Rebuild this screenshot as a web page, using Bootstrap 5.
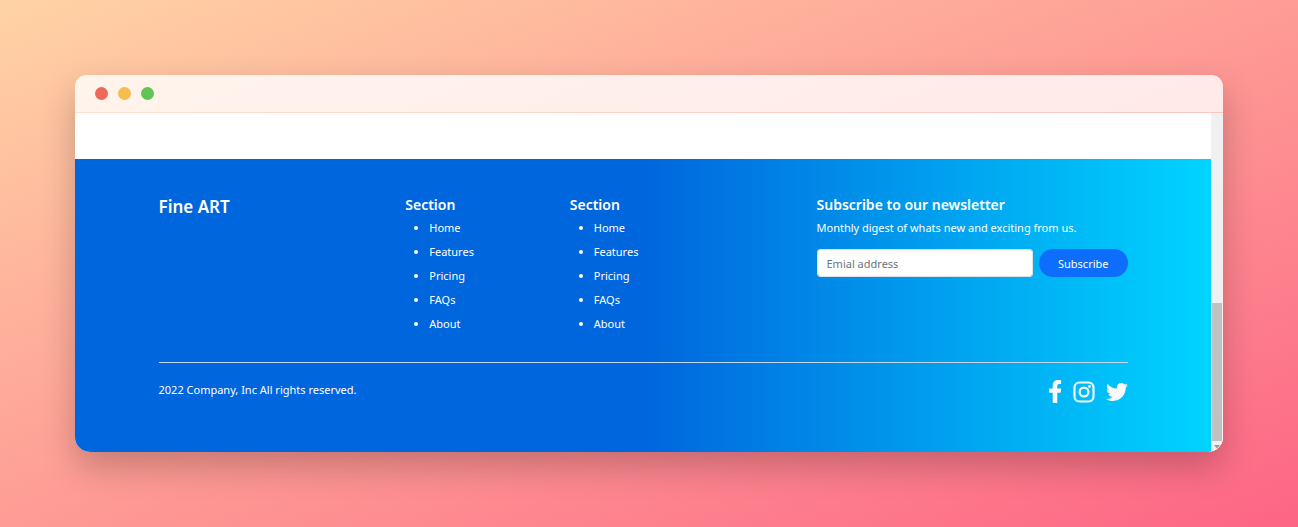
<!DOCTYPE html>
<html lang="en">
<head>
<meta charset="utf-8">
<meta name="viewport" content="width=device-width, initial-scale=1">
<title>Fine ART</title>
<link href="https://cdn.jsdelivr.net/npm/bootstrap@5.3.0/dist/css/bootstrap.min.css" rel="stylesheet">
<style>
  body {
    font-family: "Noto Sans", "Open Sans", sans-serif;
    font-size: 11px;
    line-height: 18px;
    background: linear-gradient(to bottom right, #ffd3a5 0%, #fd6585 100%);
    padding: 75px;
  }
  .window {
    border-radius: 11px 11px 15px 15px;
    box-shadow: 0 15px 34px rgba(0, 0, 0, .22);
  }
  .window-bar {
    height: 38px;
    padding: 0 20px;
    gap: 10px;
    background: rgba(255, 255, 255, .8);
    background-clip: padding-box;
    border-bottom: 1px solid rgba(255, 255, 255, .45);
    border-radius: 11px 11px 0 0;
  }
  .dot { width: 13px; height: 13px; }
  .dot-close { background: #ec695c; }
  .dot-min { background: #f4bd4e; }
  .dot-max { background: #61c454; }
  .viewport { border-radius: 0 0 15px 15px; }
  .page-end { height: 46px; }
  .site-footer {
    padding: 36px 0 49px;
    background: linear-gradient(90deg, #0066dd 0%, #0066dd 50%, #00d4ff 100%);
  }
  .footer-width { max-width: 987px; --bs-gutter-x: 18px; }
  .footer-width > .row { --bs-gutter-x: 18px; }
  .brand { font-size: 17px; line-height: 24px; font-weight: 600; }
  .heading { font-size: 14px; line-height: 20px; font-weight: 600; margin-bottom: 4px; }
  .links { padding-left: 24px; margin-bottom: 29px; }
  .links li { margin-bottom: 6px; }
  .links a { color: inherit; text-decoration: none; }
  .intro { margin-bottom: 12px; }
  .signup { gap: 6px; }
  .email {
    height: 28px;
    padding: 4px 9px;
    font-size: 11px;
    border-radius: 3px;
  }
  .email::placeholder { color: #6c757d; }
  .subscribe {
    height: 28px;
    padding: 1px 19px 0;
    font-size: 11px;
    line-height: 27px;
    border: 0;
    --bs-btn-bg: #0d6efd;
  }
  .legal { border-top: 1px solid #c3d6ee; padding-top: 17px; }
  .copyright { line-height: 20px; }
  .social { gap: 11px; color: #f8f9fa; }
  .social a { color: inherit; }
  .scroll-track { width: 12px; background: #f0f0f0; padding: 0 1px; }
  .scroll-thumb { margin-top: 190px; background: #c1c1c1; }
  .scroll-arrow { height: 11px; }
</style>
</head>
<body class="min-vh-100">
<main class="window">
  <div class="window-bar d-flex align-items-center">
    <span class="dot dot-close rounded-circle"></span>
    <span class="dot dot-min rounded-circle"></span>
    <span class="dot dot-max rounded-circle"></span>
  </div>
  <div class="viewport d-flex bg-white overflow-hidden">
    <div class="flex-grow-1">
      <div class="page-end"></div>
      <footer class="site-footer text-white">
        <div class="container-fluid footer-width">
          <div class="row">
            <div class="col-3"><h4 class="brand mb-0">Fine ART</h4></div>
            <nav class="col-2" aria-label="Section">
              <h5 class="heading">Section</h5>
              <ul class="links">
                <li><a href="#">Home</a></li>
                <li><a href="#">Features</a></li>
                <li><a href="#">Pricing</a></li>
                <li><a href="#">FAQs</a></li>
                <li><a href="#">About</a></li>
              </ul>
            </nav>
            <nav class="col-2" aria-label="More">
              <h5 class="heading">Section</h5>
              <ul class="links">
                <li><a href="#">Home</a></li>
                <li><a href="#">Features</a></li>
                <li><a href="#">Pricing</a></li>
                <li><a href="#">FAQs</a></li>
                <li><a href="#">About</a></li>
              </ul>
            </nav>
            <form class="col-4 offset-1">
              <h5 class="heading">Subscribe to our newsletter</h5>
              <p class="intro">Monthly digest of whats new and exciting from us.</p>
              <div class="signup d-flex">
                <input type="email" class="form-control email flex-fill" placeholder="Emial address" aria-label="Email address">
                <button type="button" class="btn btn-primary rounded-pill subscribe">Subscribe</button>
              </div>
            </form>
          </div>
          <div class="legal d-flex justify-content-between align-items-start">
            <p class="copyright mb-0">2022 Company, Inc All rights reserved.</p>
            <div class="social d-flex align-items-center">
              <a href="#" aria-label="Facebook" class="d-flex"><svg width="13" height="23" viewBox="0 0 13 23" fill="currentColor"><path d="M3.700 23V12.700H0V8.600H3.700V5.500C3.700 1.900 5.800 0 9.200 0c1.500 0 2.900.2 2.900.2v3.700h-1.700C8.800 3.900 8.300 4.800 8.300 5.900v2.700H12.300l-.6 4.100H8.300V23Z"/></svg></a>
              <a href="#" aria-label="Instagram" class="d-flex"><svg width="22" height="22" viewBox="0 0 22 22" fill="none" stroke="currentColor" stroke-width="2.200"><rect x="1.500" y="1.500" width="19" height="19" rx="5"/><circle cx="11" cy="11" r="4.400"/><circle cx="16.500" cy="5.500" r="1.400" fill="currentColor" stroke="none"/></svg></a>
              <a href="#" aria-label="Twitter" class="d-flex"><svg width="22" height="22" viewBox="0 0 512 512" fill="currentColor"><path d="M459.370 151.716c.325 4.548.325 9.097.325 13.645 0 138.720-105.583 298.558-298.558 298.558-59.452 0-114.680-17.219-161.137-47.106 8.447.974 16.568 1.299 25.340 1.299 49.055 0 94.213-16.568 130.274-44.832-46.132-.975-84.792-31.188-98.112-72.772 6.498.974 12.995 1.624 19.818 1.624 9.421 0 18.843-1.300 27.614-3.573-48.081-9.747-84.143-51.980-84.143-102.985v-1.299c13.969 7.797 30.214 12.670 47.431 13.319-28.264-18.843-46.781-51.005-46.781-87.391 0-19.492 5.197-37.360 14.294-52.954 51.655 63.675 129.300 105.258 216.365 109.807-1.624-7.797-2.599-15.918-2.599-24.040 0-57.828 46.782-104.934 104.934-104.934 30.213 0 57.502 12.670 76.670 33.137 23.715-4.548 46.456-13.320 66.599-25.340-7.798 24.366-24.366 44.833-46.132 57.827 21.117-2.273 41.584-8.122 60.426-16.243-14.292 20.791-32.161 39.308-52.628 54.253z"/></svg></a>
            </div>
          </div>
        </div>
      </footer>
    </div>
    <div class="scroll-track d-flex flex-column flex-shrink-0">
      <div class="scroll-thumb flex-fill"></div>
      <div class="scroll-arrow d-flex align-items-center justify-content-center"><svg width="6" height="4" viewBox="0 0 6 4"><path d="M0 0h6L3 3.500Z" fill="#999"/></svg></div>
    </div>
  </div>
</main>
<script src="https://cdn.jsdelivr.net/npm/bootstrap@5.3.0/dist/js/bootstrap.bundle.min.js"></script>
</body>
</html>
